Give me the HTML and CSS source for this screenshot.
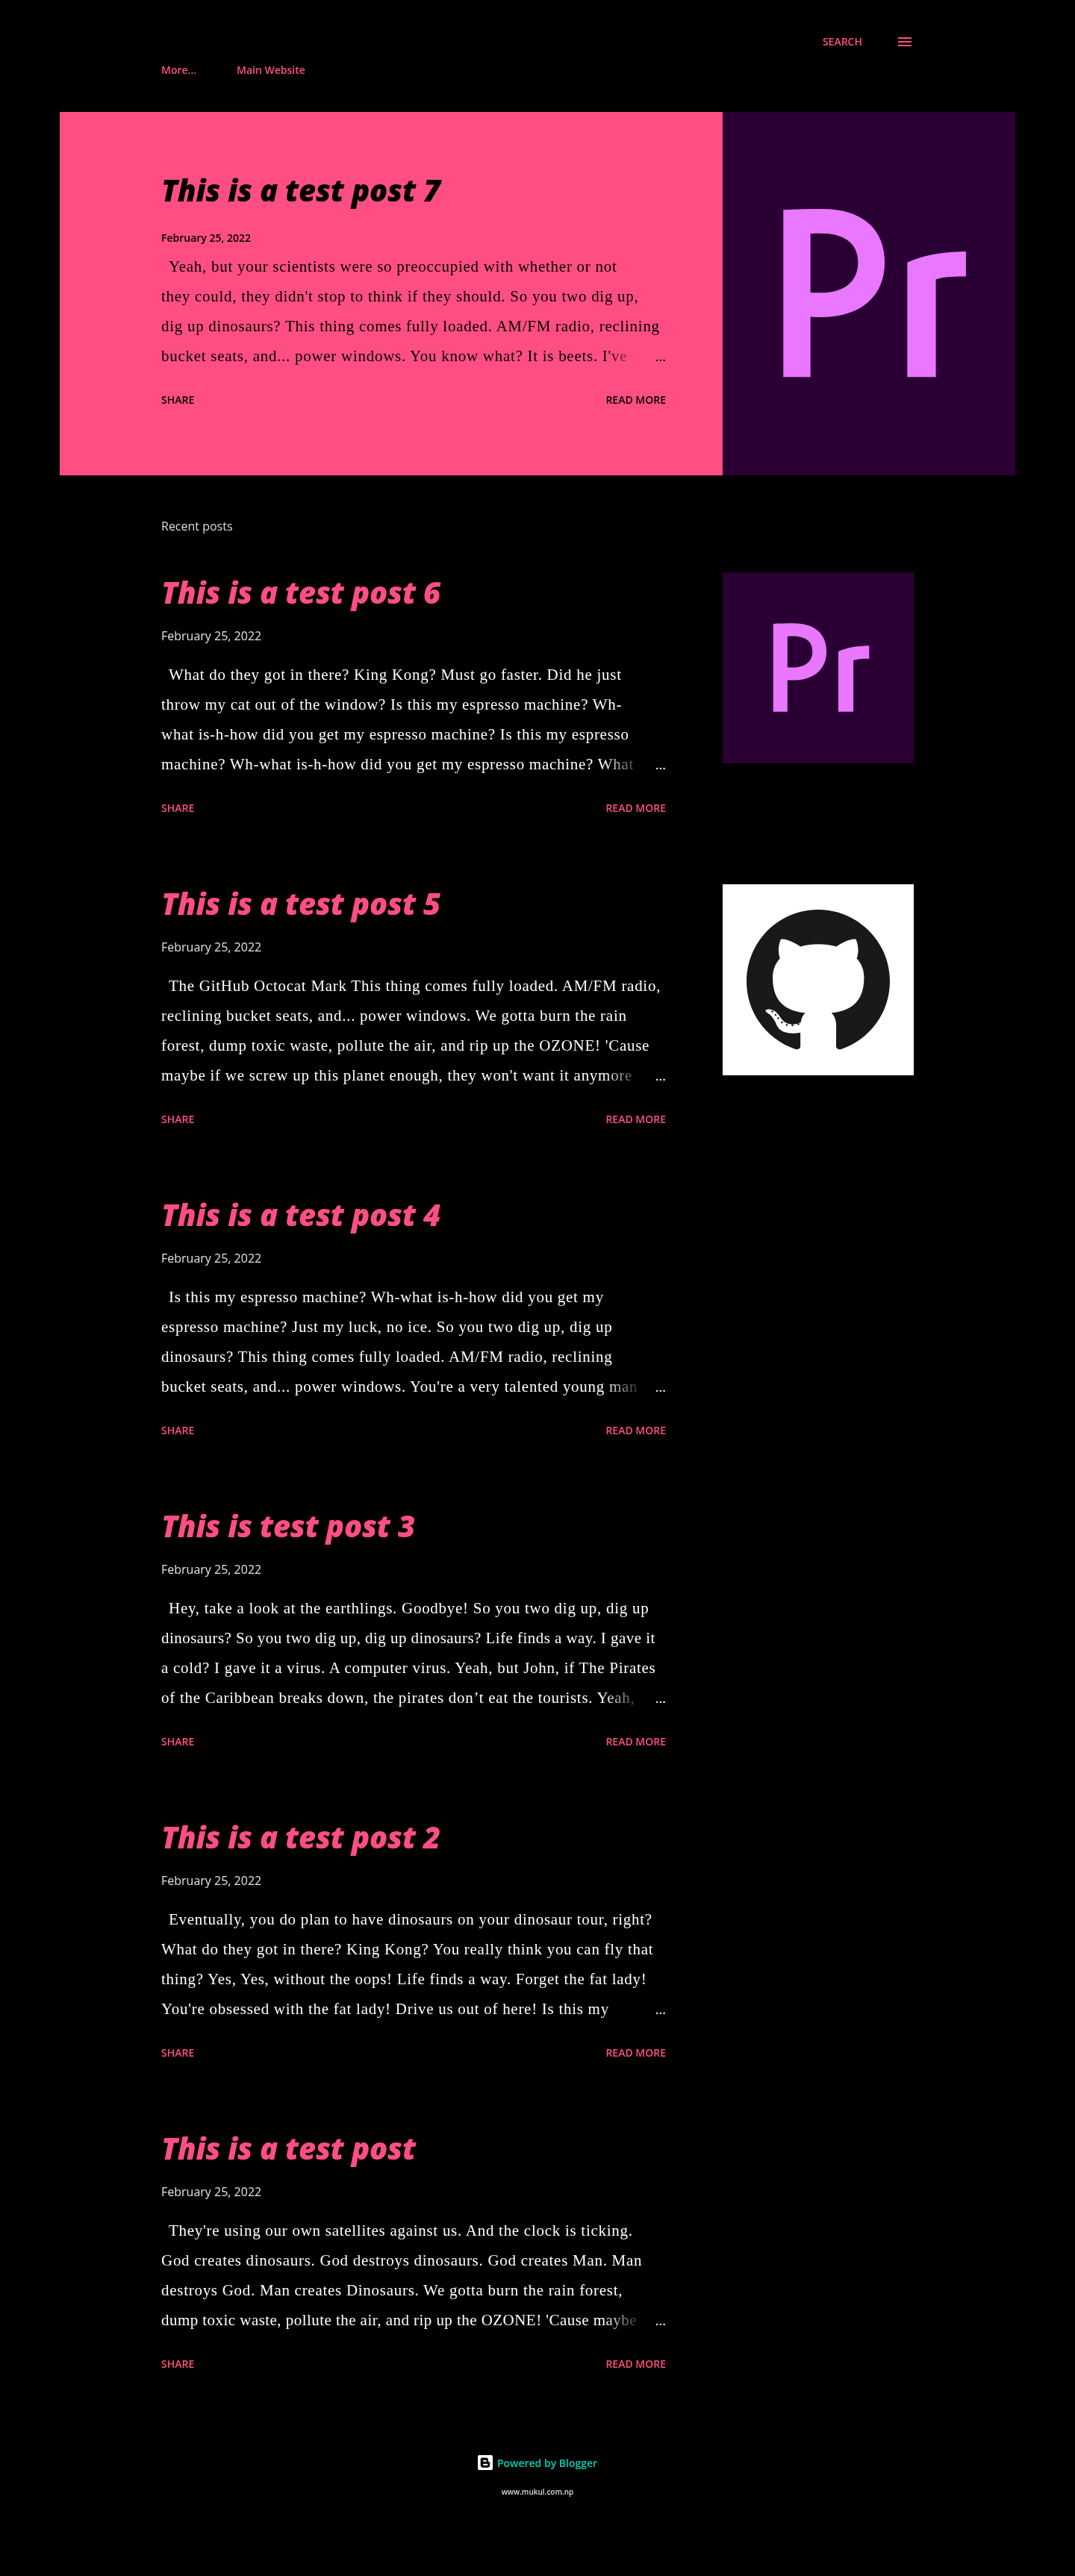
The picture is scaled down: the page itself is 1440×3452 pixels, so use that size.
FILE: index.html
```html
<!DOCTYPE html>
<html lang="en">
<head>
<meta charset="utf-8">
<title>Test blog</title>
<link rel="stylesheet" href="styles.css">
</head>
<body>
<svg class="defs" width="0" height="0" aria-hidden="true">
  <symbol id="premiere" viewBox="0 0 256 256" preserveAspectRatio="xMidYMid slice">
    <rect width="256" height="256" fill="#2a0034"/>
    <path fill="#ea77ff" fill-rule="evenodd" d="M67.7 69C76 68.4 85 68.3 94.9 68.3C124 68.3 139.1 83 139.1 105.9C139.1 130 122 144.6 94 144.6C92 144.6 89 144.5 86.8 144.3L86.8 186.7L67.7 186.7ZM86.8 85.7L86.8 127.2C89 127.4 91 127.4 94 127.4C110 127.4 120.3 120 120.3 105.9C120.3 92 110 85.5 94 85.5C91 85.5 88.5 85.6 86.8 85.7Z"/>
    <path fill="#ea77ff" d="M155 106C165 101.5 178 98.5 196.3 98.3L196.3 115.9C188 115.7 180 116.2 175.1 118L175.1 186.7L155 186.7Z"/>
  </symbol>
</svg>

<header class="top">
  <div class="top-actions">
    <a class="search-link">SEARCH</a>
    <span class="burger" aria-label="Menu"><i></i><i></i><i></i></span>
  </div>
  <nav class="menu">
    <a>More...</a>
    <a>Main Website</a>
  </nav>
</header>

<section class="hero">
  <div class="hero-text">
    <h2 class="title">This is a test post 7</h2>
    <div class="date">February 25, 2022</div>
    <p class="snippet">Yeah, but your scientists were so preoccupied with whether or not<br>they could, they didn't stop to think if they should. So you two dig up,<br>dig up dinosaurs? This thing comes fully loaded. AM/FM radio, reclining<br>bucket seats, and... power windows. You know what? It is beets. I've<span class="fade"><span class="dots">...</span></span></p>
    <div class="actions"><a>SHARE</a><a>READ MORE</a></div>
  </div>
  <svg class="hero-image" aria-hidden="true"><use href="#premiere"/></svg>
</section>

<main class="posts">
  <h3 class="section-title">Recent posts</h3>

  <article class="post">
    <div class="post-text">
      <h2 class="title">This is a test post 6</h2>
      <div class="date">February 25, 2022</div>
      <p class="snippet">What do they got in there? King Kong? Must go faster. Did he just<br>throw my cat out of the window? Is this my espresso machine? Wh-<br>what is-h-how did you get my espresso machine? Is this my espresso<br>machine? Wh-what is-h-how did you get my espresso machine? What<span class="fade"><span class="dots">...</span></span></p>
      <div class="actions"><a>SHARE</a><a>READ MORE</a></div>
    </div>
    <svg class="thumb" aria-hidden="true"><use href="#premiere"/></svg>
  </article>

  <article class="post">
    <div class="post-text">
      <h2 class="title">This is a test post 5</h2>
      <div class="date">February 25, 2022</div>
      <p class="snippet">The GitHub Octocat Mark This thing comes fully loaded. AM/FM radio,<br>reclining bucket seats, and... power windows. We gotta burn the rain<br>forest, dump toxic waste, pollute the air, and rip up the OZONE! 'Cause<br>maybe if we screw up this planet enough, they won't want it anymore<span class="fade"><span class="dots">...</span></span></p>
      <div class="actions"><a>SHARE</a><a>READ MORE</a></div>
    </div>
    <svg class="thumb thumb-octocat" viewBox="0 0 256 256" aria-hidden="true">
      <rect width="256" height="256" fill="#fff"/>
      <g transform="translate(32 34) scale(12)">
        <path fill="#1a1818" fill-rule="evenodd" d="M8 0C3.58 0 0 3.58 0 8c0 3.54 2.29 6.53 5.47 7.59.4.07.55-.17.55-.38 0-.19-.01-.82-.01-1.49-2.01.37-2.53-.49-2.69-.94-.09-.23-.48-.94-.82-1.13-.28-.15-.68-.52-.01-.53.63-.01 1.08.58 1.23.82.72 1.21 1.87.87 2.33.66.07-.52.28-.87.51-1.07-1.78-.2-3.64-.89-3.64-3.95 0-.87.31-1.59.82-2.15-.08-.2-.36-1.02.08-2.12 0 0 .67-.21 2.2.82.64-.18 1.32-.27 2-.27.68 0 1.36.09 2 .27 1.53-1.04 2.2-.82 2.2-.82.44 1.1.16 1.92.08 2.12.51.56.82 1.27.82 2.15 0 3.07-1.87 3.75-3.65 3.95.29.25.54.73.54 1.48 0 1.07-.01 1.93-.01 2.2 0 .21.15.46.55.38A8.013 8.013 0 0016 8c0-4.42-3.58-8-8-8z"/>
      </g>
      <g fill="#1a1818">
        <circle cx="66.5" cy="170.5" r="1.2"/><circle cx="71" cy="175" r="1.2"/><circle cx="74.5" cy="179.5" r="1.2"/><circle cx="79.5" cy="185" r="1.3"/><circle cx="86" cy="188.5" r="1.3"/><circle cx="93.5" cy="189" r="1.3"/><circle cx="101.5" cy="187.5" r="1.3"/>
      </g>
    </svg>
  </article>

  <article class="post">
    <div class="post-text">
      <h2 class="title">This is a test post 4</h2>
      <div class="date">February 25, 2022</div>
      <p class="snippet">Is this my espresso machine? Wh-what is-h-how did you get my<br>espresso machine? Just my luck, no ice. So you two dig up, dig up<br>dinosaurs? This thing comes fully loaded. AM/FM radio, reclining<br>bucket seats, and... power windows. You're a very talented young man<span class="fade"><span class="dots">...</span></span></p>
      <div class="actions"><a>SHARE</a><a>READ MORE</a></div>
    </div>
  </article>

  <article class="post">
    <div class="post-text">
      <h2 class="title">This is test post 3</h2>
      <div class="date">February 25, 2022</div>
      <p class="snippet">Hey, take a look at the earthlings. Goodbye! So you two dig up, dig up<br><span class="tight">dinosaurs? So you two dig up, dig up dinosaurs? Life finds a way. I gave it</span><br>a cold? I gave it a virus. A computer virus. Yeah, but John, if The Pirates<br>of the Caribbean breaks down, the pirates don’t eat the tourists. Yeah,<span class="fade"><span class="dots">...</span></span></p>
      <div class="actions"><a>SHARE</a><a>READ MORE</a></div>
    </div>
  </article>

  <article class="post">
    <div class="post-text">
      <h2 class="title">This is a test post 2</h2>
      <div class="date">February 25, 2022</div>
      <p class="snippet">Eventually, you do plan to have dinosaurs on your dinosaur tour, right?<br>What do they got in there? King Kong? You really think you can fly that<br>thing? Yes, Yes, without the oops! Life finds a way. Forget the fat lady!<br>You're obsessed with the fat lady! Drive us out of here! Is this my<span class="fade"><span class="dots">...</span></span></p>
      <div class="actions"><a>SHARE</a><a>READ MORE</a></div>
    </div>
  </article>

  <article class="post">
    <div class="post-text">
      <h2 class="title">This is a test post</h2>
      <div class="date">February 25, 2022</div>
      <p class="snippet">They're using our own satellites against us. And the clock is ticking.<br>God creates dinosaurs. God destroys dinosaurs. God creates Man. Man<br>destroys God. Man creates Dinosaurs. We gotta burn the rain forest,<br><span class="tight">dump toxic waste, pollute the air, and rip up the OZONE! 'Cause maybe</span><span class="fade"><span class="dots">...</span></span></p>
      <div class="actions"><a>SHARE</a><a>READ MORE</a></div>
    </div>
  </article>
</main>

<footer class="footer">
  <div class="powered">
    <svg class="blogger" viewBox="0 0 20 20" aria-hidden="true">
      <rect width="20" height="20" rx="2" fill="#fff"/>
      <path fill="#000" d="M6 3.4H11C13 3.4 14 4.7 14 6.3V8C14 8.6 14.4 9 15 9C15.8 9 16.3 9.5 16.3 10.3V13.5C16.3 15.4 15 16.7 13 16.7H7C5 16.7 3.7 15.4 3.7 13.5V6C3.7 4.5 4.6 3.4 6 3.4Z"/>
      <path fill="none" stroke="#fff" stroke-linecap="round" stroke-width="2" d="M8 7.7H11M8 12.8H12.6"/>
    </svg>
    <span>Powered by Blogger</span>
  </div>
  <div class="credit">www.mukul.com.np</div>
</footer>
</body>
</html>
```

FILE: styles.css
```css
* { box-sizing: border-box; }
html, body { margin: 0; padding: 0; }
body {
  background: #000;
  color: #fff;
  font-family: "Open Sans", sans-serif;
  --pink: #ff4f82;
}
.defs { display: block; height: 0; }

/* own layers: text is antialiased in greys, as in the reference */
.top, .hero-text, .section-title, .post-text, .footer { will-change: transform; }

.top { padding: 46px 219px 0 216px; }
.top-actions {
  display: flex;
  justify-content: flex-end;
  align-items: center;
  gap: 48px;
  height: 20px;
}
.search-link { color: var(--pink); font-size: 14px; font-weight: 600; line-height: 20px; }
.burger { display: flex; flex-direction: column; gap: 3px; width: 18px; }
.burger i { display: block; height: 2px; background: var(--pink); }
.menu {
  display: flex;
  gap: 54px;
  margin-top: 18px;
  height: 20px;
  line-height: 20px;
  font-size: 14px;
  font-weight: 600;
  color: var(--pink);
}

.hero {
  display: flex;
  margin: 46px 80px 0;
  height: 487px;
  background: var(--pink);
  color: #000;
  --bg: #ff4f82;
  --bg0: rgba(255, 79, 130, 0);
}
.hero-text { width: 888px; padding: 80px 76px 0 136px; flex: none; }
.hero-image { width: 392px; height: 487px; display: block; flex: none; }
.hero .date { margin-top: 29px; font-size: 14px; font-weight: 600; }
.hero .snippet { margin-top: 8px; }

.title {
  margin: 0;
  font-size: 40px;
  letter-spacing: -0.25px;
  line-height: 50px;
  font-weight: 800;
  font-style: italic;
}
.date { font-size: 16px; line-height: 20px; font-weight: 500; margin-top: 23px; }
.snippet {
  position: relative;
  margin: 22px 0 0;
  font-family: "Liberation Serif", serif;
  font-size: 21px;
  letter-spacing: 0.72px;
  line-height: 40px;
  height: 160px;
  white-space: nowrap;
  overflow: hidden;
  text-indent: 10px;
}
.tight { letter-spacing: 0.45px; }
.fade {
  position: absolute;
  right: 0;
  bottom: 0;
  width: 84px;
  height: 40px;
  text-indent: 0;
  text-align: right;
  letter-spacing: 0;
  background: linear-gradient(to right, var(--bg0), var(--bg) 66%);
}
.dots { font-size: 19px; }
.actions {
  display: flex;
  justify-content: space-between;
  margin-top: 29px;
  font-size: 14px;
  line-height: 20px;
  font-weight: 600;
}

.posts {
  padding: 0 216px;
  --bg: #000;
  --bg0: rgba(0, 0, 0, 0);
}
.section-title {
  margin: 58px 0 52px;
  font-size: 16px;
  line-height: 20px;
  font-weight: 400;
  color: #ddd;
}
.post {
  display: flex;
  gap: 76px;
  height: 417px;
  align-items: flex-start;
}
.post-text { width: 676px; flex: none; padding-top: 2px; }
.post .title { color: var(--pink); }
.post .date { color: #e4e4e4; }
.post .actions { color: var(--pink); }
.thumb { width: 256px; height: 256px; display: block; flex: none; }
.thumb-octocat { margin-top: 1px; }

.footer { padding-top: 21px; display: flex; flex-direction: column; align-items: center; }
.powered {
  display: flex;
  align-items: center;
  gap: 6px;
  height: 20px;
  color: #00d0b4;
  font-size: 14px;
  font-weight: 600;
}
.blogger { width: 20px; height: 20px; display: block; }
.credit {
  margin-top: 22px;
  font-size: 10px;
  line-height: 14px;
  font-weight: 600;
  color: #ddd;
}
```
